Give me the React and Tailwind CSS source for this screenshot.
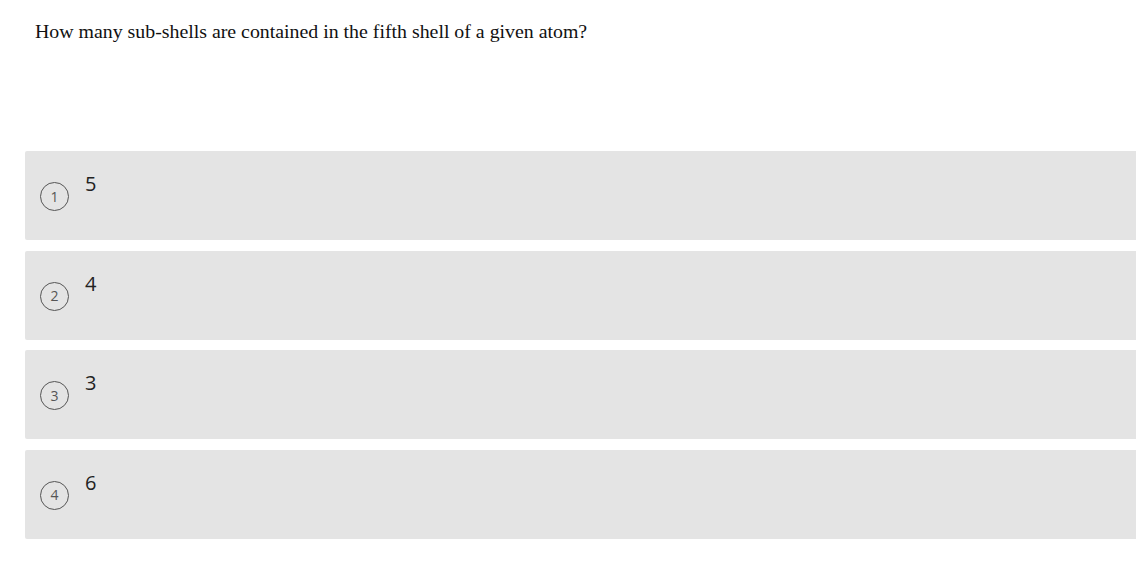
export default function App() {
  const opts = [
    ["1", "5"],
    ["2", "4"],
    ["3", "3"],
    ["4", "6"],
  ];
  return (
    <div className="w-[1136px] h-[563px] bg-white overflow-hidden">
      <div
        className="pl-[35px] pt-[18px] text-[19.85px] leading-[26px] text-[#111]"
        style={{ fontFamily: '"Liberation Serif", serif' }}
      >
        How many sub-shells are contained in the fifth shell of a given atom?
      </div>
      <div className="mt-[107px] ml-[25px] flex flex-col gap-[10.5px]">
        {opts.map(([n, v]) => (
          <div
            key={n}
            className="h-[89px] w-[1120px] bg-[#e4e4e4] rounded-[2px] flex items-start"
            style={{ fontFamily: '"Open Sans", sans-serif' }}
          >
            <div className="ml-[15px] mt-[31px] w-[29px] h-[29px] rounded-full border-[1.5px] border-[#555] flex items-center justify-center text-[14px] leading-none text-[#555]">
              {n}
            </div>
            <div className="ml-[16px] mt-[20px] text-[20px] leading-[26px] text-[#222]">
              {v}
            </div>
          </div>
        ))}
      </div>
    </div>
  );
}
